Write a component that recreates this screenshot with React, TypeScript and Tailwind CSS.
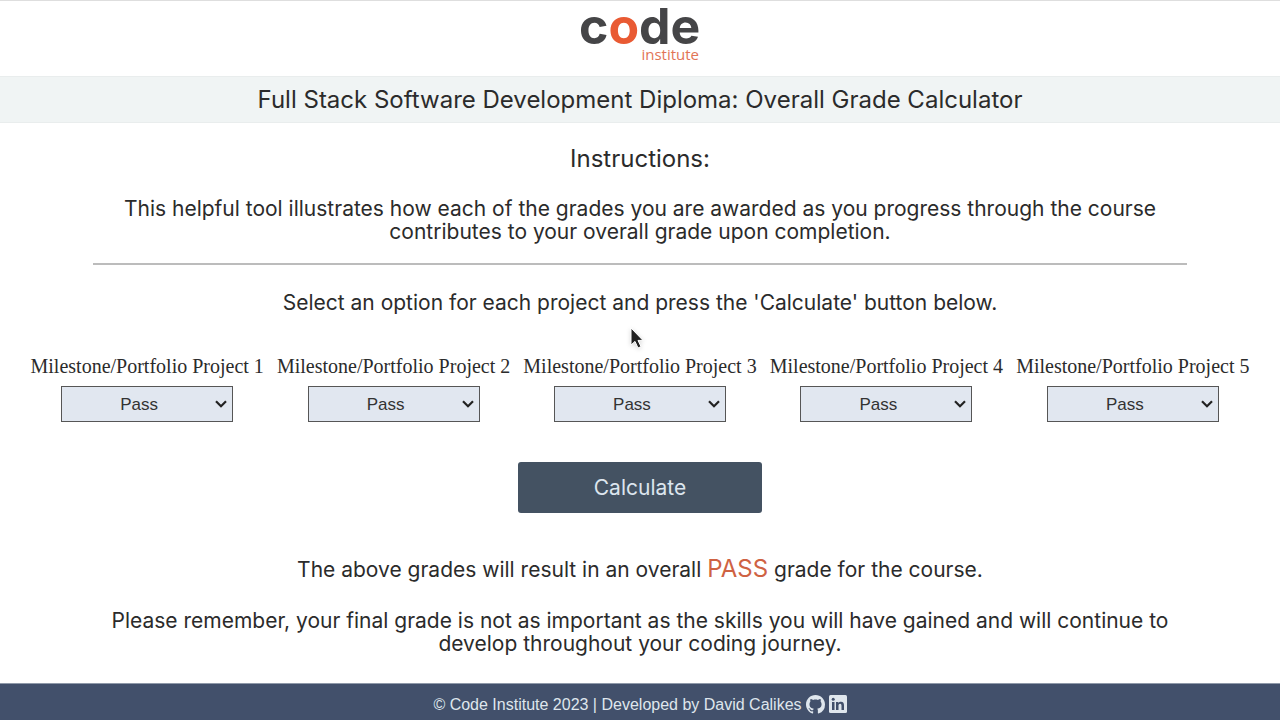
import { useState } from "react";

const projects = [1, 2, 3, 4, 5];
const grades = ["Pass", "Merit", "Distinction"];

function Logo() {
  return (
    <svg
      role="img"
      aria-label="Code Institute"
      width="124"
      height="64"
      viewBox="0 0 124 64"
      className="block overflow-visible font-['Inter',sans-serif]"
    >
      <text x="1" y="39" fontSize="50" fontWeight="650" fill="#454547">
        c<tspan fill="#e95a33">o</tspan>de
      </text>
      <text x="121" y="55" textAnchor="end" fontSize="15" fill="#e27455" className="font-['Open_Sans',sans-serif]">
        institute
      </text>
    </svg>
  );
}

function Pointer() {
  return (
    <svg
      aria-hidden="true"
      width="16"
      height="24"
      viewBox="0 0 16 24"
      className="absolute left-1/2 top-9 -ml-2.5 drop-shadow-sm"
    >
      <path d="M1 1v17l4-3.6 3 6.6 3-1.4-3-6.2h5z" fill="#222" stroke="#fff" strokeWidth="1" />
    </svg>
  );
}

function ProjectSelect({ number }: { number: number }) {
  const id = `project-${number}`;
  return (
    <div className="flex flex-col items-center gap-2">
      <label htmlFor={id} className="whitespace-nowrap font-['Liberation_Serif',serif] text-[20px] leading-6">
        Milestone/Portfolio Project {number}
      </label>
      <div className="grid w-43 items-center">
        <select
          id={id}
          className="col-start-1 row-start-1 h-9 w-full appearance-none border border-[#565656] bg-[#e1e7f0] pr-4 text-center font-['Liberation_Sans',sans-serif] text-[17px] text-[#333]"
        >
          {grades.map((grade) => (
            <option key={grade}>{grade}</option>
          ))}
        </select>
        <svg
          aria-hidden="true"
          width="12"
          height="8"
          viewBox="0 0 12 8"
          className="pointer-events-none col-start-1 row-start-1 mr-1.5 justify-self-end"
        >
          <path d="M1 1.2l5 5 5-5" fill="none" stroke="#222" strokeWidth="2.2" />
        </svg>
      </div>
    </div>
  );
}

export default function App() {
  const [result, setResult] = useState("PASS");
  return (
    <div className="flex min-h-screen flex-col border-t border-[#dedede] bg-white font-['Inter',sans-serif] text-[21px] leading-[23px] text-[#2b2b2b]">
      <header>
        <div className="flex h-[75px] justify-center pt-1">
          <Logo />
        </div>
        <h1 className="border-y border-[#e9eded] bg-[#f0f4f4] py-2 text-center text-[24px] leading-[29px]">
          Full Stack Software Development Diploma: Overall Grade Calculator
        </h1>
      </header>

      <main className="grow text-center">
        <section className="mx-auto w-[1094px] max-w-full border-b-2 border-[#bcbcbc] py-5">
          <h2 className="mb-[22px] text-[24px] leading-8">Instructions:</h2>
          <p>
            This helpful tool illustrates how each of the grades you are awarded as you progress through the course
            <br />
            contributes to your overall grade upon completion.
          </p>
        </section>

        <div className="relative mt-[26px]">
          <p>Select an option for each project and press the 'Calculate' button below.</p>
          <Pointer />
        </div>

        <div className="mt-10 grid grid-cols-5 px-6">
          {projects.map((number) => (
            <ProjectSelect key={number} number={number} />
          ))}
        </div>

        <button
          type="button"
          onClick={() => setResult("PASS")}
          className="mt-10 h-[51px] w-61 rounded-[3px] bg-[#445262] text-[21px] text-[#dce5ee]"
        >
          Calculate
        </button>

        <p className="mt-11">
          The above grades will result in an overall <strong className="text-[24px] font-normal text-[#cf6243]">{result}</strong> grade
          for the course.
        </p>
        <p className="mt-7">
          Please remember, your final grade is not as important as the skills you will have gained and will continue to
          <br />
          develop throughout your coding journey.
        </p>
      </main>

      <footer className="flex h-[37px] items-center justify-center gap-1 border-t border-[#8f99a9] bg-[#42506b] pt-1 font-['Liberation_Sans',sans-serif] text-[16px] text-[#dfe6ed]">
        <p>© Code Institute 2023 | Developed by David Calikes</p>
        <a href="https://github.com" aria-label="GitHub">
          <svg width="19" height="19" viewBox="0 0 16 16" fill="currentColor">
            <path d="M8 0C3.58 0 0 3.58 0 8c0 3.54 2.29 6.53 5.47 7.59.4.07.55-.17.55-.38 0-.19-.01-.82-.01-1.49-2.01.37-2.53-.49-2.69-.94-.09-.23-.48-.94-.82-1.13-.28-.15-.68-.52-.01-.53.63-.01 1.08.58 1.23.82.72 1.21 1.87.87 2.33.66.07-.52.28-.87.51-1.07-1.78-.2-3.64-.89-3.64-3.95 0-.87.31-1.59.82-2.15-.08-.2-.36-1.02.08-2.12 0 0 .67-.21 2.2.82.64-.18 1.32-.27 2-.27s1.36.09 2 .27c1.53-1.04 2.2-.82 2.2-.82.44 1.1.16 1.92.08 2.12.51.56.82 1.27.82 2.15 0 3.07-1.87 3.75-3.65 3.95.29.25.54.73.54 1.48 0 1.07-.01 1.93-.01 2.2 0 .21.15.46.55.38A8.01 8.01 0 0 0 16 8c0-4.42-3.58-8-8-8z" />
          </svg>
        </a>
        <a href="https://www.linkedin.com" aria-label="LinkedIn">
          <svg width="18" height="18" viewBox="0 0 18 18">
            <rect width="18" height="18" rx="1.5" fill="currentColor" />
            <circle cx="4.2" cy="4.3" r="1.5" fill="#42506b" />
            <path d="M3 7h2.500v8H3zM7 7h2.400v1.200C10 7.300 10.900 6.800 12 6.800c2.400 0 3 1.600 3 3.800V15h-2.500v-4c0-1.100-.1-2.200-1.400-2.200-1.300 0-1.600 1-1.600 2.100V15H7z" fill="#42506b" />
          </svg>
        </a>
      </footer>
    </div>
  );
}
